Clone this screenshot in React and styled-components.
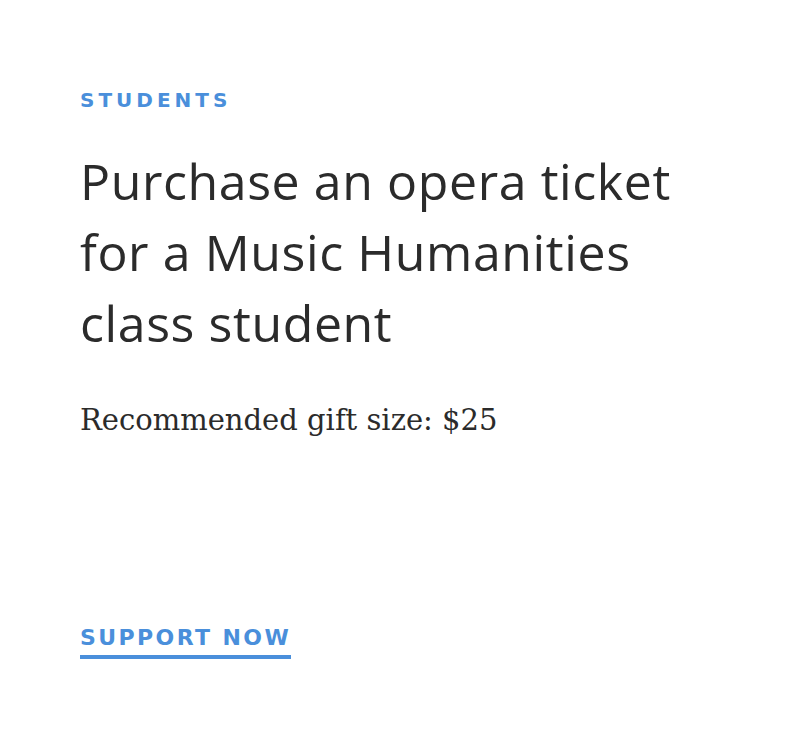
import styled, { createGlobalStyle } from "styled-components";

const GlobalStyle = createGlobalStyle`
  html, body {
    margin: 0;
    padding: 0;
    background: #fff;
  }
`;

const Card = styled.article`
  box-sizing: border-box;
  width: 800px;
  height: 740px;
  padding: 86px 80px 0;
  display: flex;
  flex-direction: column;
  background: #fff;
`;

const Label = styled.span`
  font-family: "DejaVu Sans", "Open Sans", sans-serif;
  font-weight: 700;
  font-size: ${(p) => p.$size || 20}px;
  letter-spacing: ${(p) => p.$spacing || 4}px;
  text-transform: uppercase;
  color: #4a8fdb;
  line-height: 28px;
`;

const Eyebrow = styled(Label)`
  display: block;
`;

const Title = styled.h2`
  margin: 32px 0 0;
  font-family: "Open Sans", Lato, sans-serif;
  font-weight: 400;
  font-size: 50px;
  line-height: 71px;
  letter-spacing: 0.6px;
  color: #2b2b2b;
  max-width: 640px;
  font-variant-ligatures: none;
`;

const Meta = styled.p`
  margin: 41px 0 0;
  font-family: "DejaVu Serif", "Liberation Serif", serif;
  font-size: 29px;
  line-height: 40px;
  color: #2b2b2b;
`;

const Action = styled(Label).attrs({ as: "a" })`
  align-self: flex-start;
  margin-top: 184px;
  padding-bottom: 3px;
  border-bottom: 4px solid #4a8fdb;
  text-decoration: none;
`;

export default function App() {
  return (
    <>
      <GlobalStyle />
      <Card>
        <Eyebrow>Students</Eyebrow>
        <Title>Purchase an opera ticket for a Music Humanities class student</Title>
        <Meta>Recommended gift size: $25</Meta>
        <Action href="#" $size={22} $spacing={2.4}>
          Support now
        </Action>
      </Card>
    </>
  );
}
